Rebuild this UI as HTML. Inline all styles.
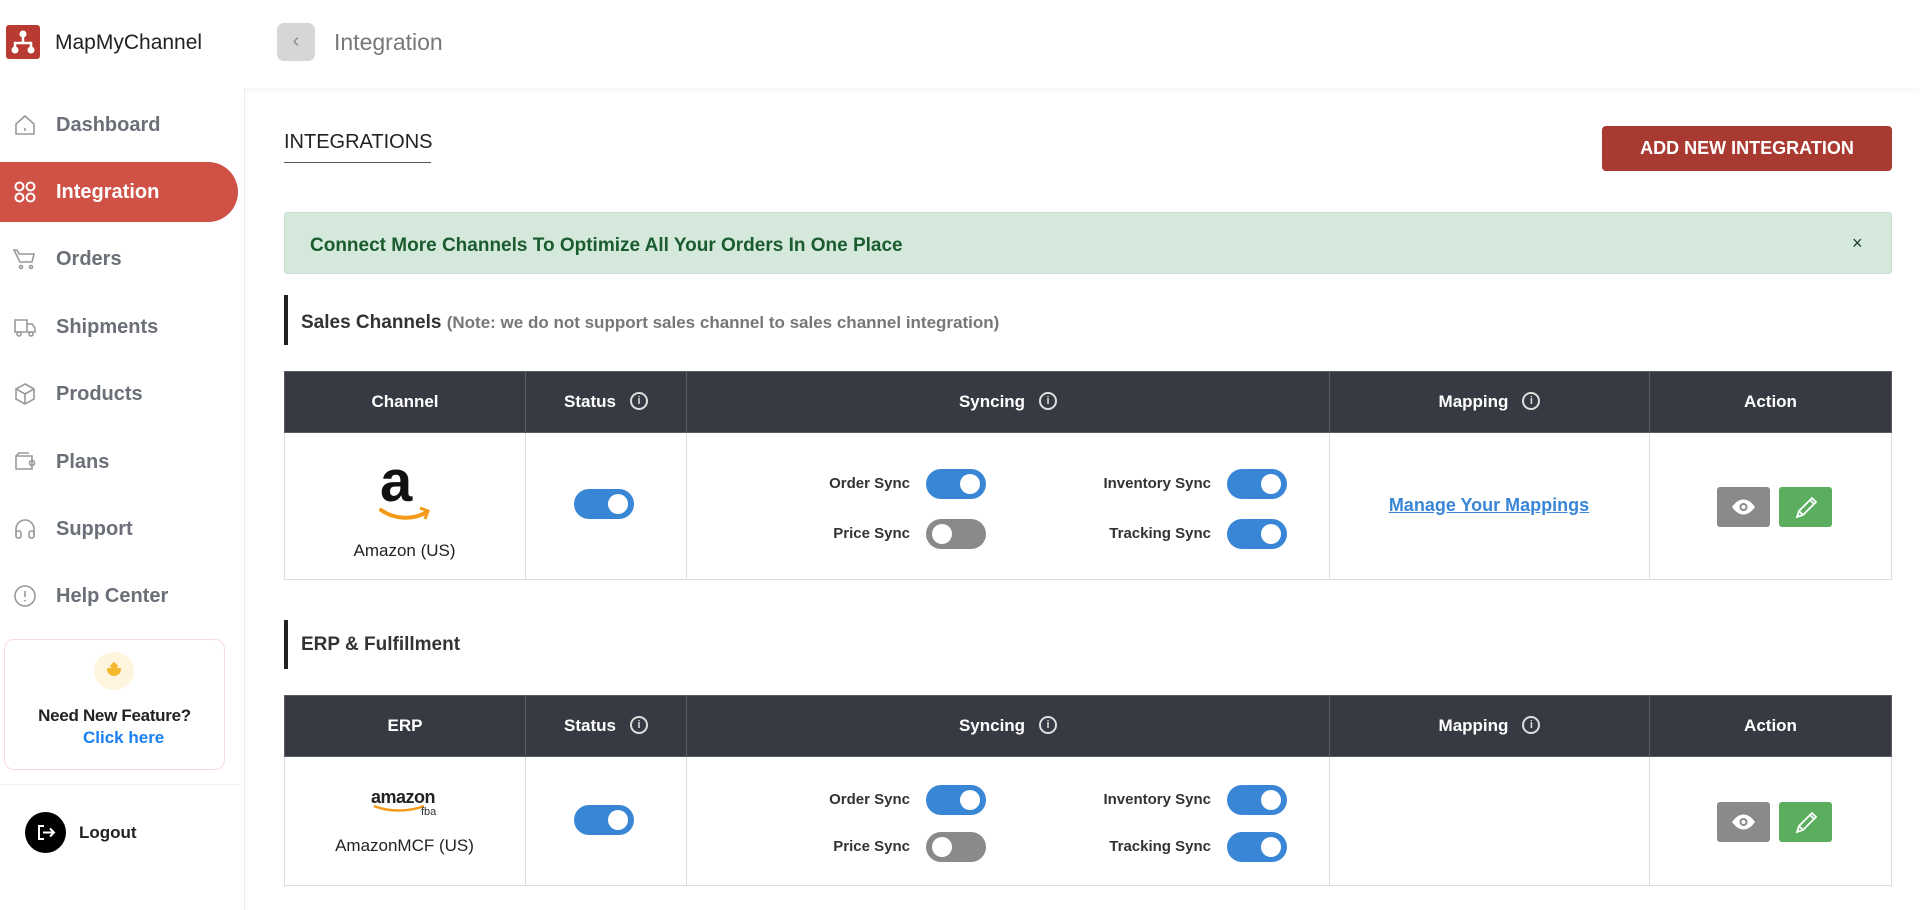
<!DOCTYPE html>
<html><head><meta charset="utf-8"><style>
*{margin:0;padding:0;box-sizing:border-box}
body{width:1920px;height:910px;overflow:hidden;background:#fff;font-family:"Liberation Sans",Arial,sans-serif;position:relative}
.a{position:absolute}
.hdr{left:0;top:0;width:1920px;height:88px;background:#fff;box-shadow:0 2px 8px rgba(0,0,0,.05)}
.side{left:0;top:88px;width:245px;height:822px;border-right:1px solid #ececf0;background:#fff}
.nav{left:0;width:238px;height:60px;display:flex;align-items:center;font-size:20px;font-weight:bold;color:#6b6f78}
.nav svg{position:absolute;left:13px}
.nav span{position:absolute;left:56px}
.nav.act{background:#d05145;color:#fff;border-radius:0 30px 30px 0}
.tog{position:absolute;width:60px;height:30px;border-radius:15px;background:#3a86d6}
.tog::after{content:"";position:absolute;right:6px;top:5px;width:20px;height:20px;border-radius:50%;background:#fff}
.tog.off{background:#8a898c}
.tog.off::after{left:6px;right:auto}
.lbl{position:absolute;font-size:15px;font-weight:bold;color:#333;text-align:right;width:200px}
table{position:absolute;left:284px;width:1608px;border-collapse:collapse}
th{background:#373a42;color:#fff;font-size:17px;font-weight:bold;height:61px;border:1px solid #5a5d65}
td{border:1px solid #ddd;position:relative}
.i{display:inline-block;width:18px;height:18px;border:2px solid #ddd;border-radius:50%;vertical-align:middle;margin-left:14px;position:relative;top:-2px;font-size:11px;line-height:14px;text-align:center;color:#ddd}
.btn{position:absolute;width:53px;height:40px;border-radius:3px}
</style></head><body>
<div class="a hdr"></div>
<div class="a" style="left:6px;top:25px;width:34px;height:34px;background:#b83a30;border-radius:3px">
<svg width="34" height="34" viewBox="0 0 34 34"><circle cx="17" cy="9" r="3.5" fill="#fff"/><circle cx="9" cy="25" r="3.5" fill="#fff"/><circle cx="25" cy="25" r="3.5" fill="#fff"/><path d="M17 12v6M9 22v-4h16v4" stroke="#fff" stroke-width="2.5" fill="none"/></svg></div>
<div class="a" style="left:55px;top:31px;font-size:21px;color:#222">MapMyChannel</div>
<div class="a" style="left:277px;top:23px;width:38px;height:38px;background:#d6d6d9;border-radius:7px;color:#888;font-size:20px;text-align:center;line-height:36px">‹</div>
<div class="a" style="left:334px;top:29px;font-size:23px;color:#777">Integration</div>

<div class="a side"></div>
<div class="a nav" style="top:95px"><svg width="24" height="24" viewBox="0 0 24 24" fill="none" stroke="#999" stroke-width="1.6"><path d="M3 11l9-8 9 8v10H3z" stroke-linejoin="round"/><path d="M12 15v3"/></svg><span>Dashboard</span></div>
<div class="a nav act" style="top:162px"><svg width="24" height="24" viewBox="0 0 24 24" fill="none" stroke="#fff" stroke-width="2"><circle cx="6.5" cy="6.5" r="4"/><circle cx="17.5" cy="6.5" r="4"/><circle cx="6.5" cy="17.5" r="4"/><circle cx="17.5" cy="17.5" r="4"/></svg><span>Integration</span></div>
<div class="a nav" style="top:229px"><svg width="24" height="24" viewBox="0 0 24 24" fill="none" stroke="#999" stroke-width="1.6"><path d="M1 3h3l2 4h15l-2 8H7z"/><circle cx="8" cy="20" r="1.5"/><circle cx="18" cy="20" r="1.5"/></svg><span>Orders</span></div>
<div class="a nav" style="top:297px"><svg width="24" height="24" viewBox="0 0 24 24" fill="none" stroke="#999" stroke-width="1.6"><path d="M2 5h12v12H2zM14 9h5l3 4v4h-8z"/><circle cx="6" cy="19" r="2"/><circle cx="18" cy="19" r="2"/></svg><span>Shipments</span></div>
<div class="a nav" style="top:364px"><svg width="24" height="24" viewBox="0 0 24 24" fill="none" stroke="#999" stroke-width="1.6"><path d="M12 2l9 5v10l-9 5-9-5V7zM3 7l9 5 9-5M12 12v10"/></svg><span>Products</span></div>
<div class="a nav" style="top:432px"><svg width="24" height="24" viewBox="0 0 24 24" fill="none" stroke="#999" stroke-width="1.6"><path d="M3 6h16v13H3zM3 6l3-3h10"/><circle cx="19" cy="13" r="2.5"/></svg><span>Plans</span></div>
<div class="a nav" style="top:499px"><svg width="24" height="24" viewBox="0 0 24 24" fill="none" stroke="#999" stroke-width="1.6"><path d="M3 18v-6a9 9 0 0118 0v6"/><rect x="3" y="14" width="5" height="7" rx="2"/><rect x="16" y="14" width="5" height="7" rx="2"/></svg><span>Support</span></div>
<div class="a nav" style="top:566px"><svg width="24" height="24" viewBox="0 0 24 24" fill="none" stroke="#999" stroke-width="1.6"><circle cx="12" cy="12" r="10"/><path d="M12 7v6M12 16v1.5"/></svg><span>Help Center</span></div>

<div class="a" style="left:4px;top:639px;width:221px;height:131px;border:1px solid #fadadd;border-radius:10px"></div>
<div class="a" style="left:94px;top:652px;width:40px;height:38px;border-radius:50%;background:#fff4de"></div>
<div class="a" style="left:107px;top:668px;width:14px;height:8px;background:#f5b92e;border-radius:0 0 8px 8px"></div>
<div class="a" style="left:111px;top:663px;width:6px;height:6px;background:#f5b92e;transform:rotate(45deg)"></div>
<div class="a" style="left:0;top:706px;width:229px;text-align:center;font-size:17px;color:#222;font-weight:bold;letter-spacing:-.3px">Need New Feature?</div>
<div class="a" style="left:83px;top:728px;font-size:17px;color:#1a7ff0;font-weight:bold">Click here</div>
<div class="a" style="left:0;top:784px;width:240px;height:1px;background:#f0f0f4"></div>
<div class="a" style="left:25px;top:812px;width:41px;height:41px;border-radius:50%;background:#000">
<svg width="41" height="41" viewBox="0 0 41 41" fill="none" stroke="#fff" stroke-width="2"><path d="M19 14h-5v13h5M18 20.5h11M25 16.5l4 4-4 4"/></svg></div>
<div class="a" style="left:79px;top:823px;font-size:17px;color:#222;font-weight:bold">Logout</div>

<div class="a" style="left:284px;top:131px;font-size:20px;color:#222">INTEGRATIONS</div>
<div class="a" style="left:284px;top:162px;width:147px;height:1px;background:#555"></div>
<div class="a" style="left:1602px;top:126px;width:290px;height:45px;background:#a93a31;border-radius:4px;color:#fff;font-size:18px;font-weight:bold;text-align:center;line-height:45px">ADD NEW INTEGRATION</div>

<div class="a" style="left:284px;top:212px;width:1608px;height:62px;background:#d4e9dc;border:1px solid #c6e1d0;border-radius:3px"></div>
<div class="a" style="left:310px;top:235px;font-size:19px;font-weight:bold;color:#1a5c2e">Connect More Channels To Optimize All Your Orders In One Place</div>
<div class="a" style="left:1852px;top:233px;font-size:18px;color:#1a3a2a">×</div>

<div class="a" style="left:284px;top:295px;width:4px;height:50px;background:#222"></div>
<div class="a" style="left:301px;top:312px;font-size:19px;font-weight:bold;color:#333">Sales Channels <span style="font-size:17px;color:#777">(Note: we do not support sales channel to sales channel integration)</span></div>

<table style="top:371px">
<tr><th style="width:241px">Channel</th><th style="width:161px">Status<span class="i">i</span></th><th style="width:643px">Syncing<span class="i">i</span></th><th style="width:320px">Mapping<span class="i">i</span></th><th>Action</th></tr>
<tr><td style="height:147px"></td><td></td><td></td><td></td><td></td></tr>
</table>
<div class="a" style="left:380px;top:452px;font-size:58px;font-weight:bold;color:#111;line-height:60px">a</div>
<svg class="a" style="left:378px;top:505px" width="56" height="20" viewBox="0 0 56 20"><path d="M3 5c14 10 32 10 46 2" stroke="#f49a1a" stroke-width="4" fill="none" stroke-linecap="round"/><path d="M42 3l8 3-3 8" stroke="#f49a1a" stroke-width="3" fill="none"/></svg>
<div class="a" style="left:284px;top:541px;width:241px;text-align:center;font-size:17px;color:#222">Amazon (US)</div>
<div class="tog" style="left:574px;top:489px"></div>
<div class="lbl" style="left:710px;top:475px">Order Sync</div><div class="tog" style="left:926px;top:469px"></div>
<div class="lbl" style="left:710px;top:525px">Price Sync</div><div class="tog off" style="left:926px;top:519px"></div>
<div class="lbl" style="left:1011px;top:475px">Inventory Sync</div><div class="tog" style="left:1227px;top:469px"></div>
<div class="lbl" style="left:1011px;top:525px">Tracking Sync</div><div class="tog" style="left:1227px;top:519px"></div>
<div class="a" style="left:1329px;top:495px;width:320px;text-align:center;font-size:18px;font-weight:bold;color:#3a86d6;text-decoration:underline">Manage Your Mappings</div>
<div class="btn" style="left:1717px;top:487px;background:#8a898c"><svg width="53" height="40" viewBox="0 0 53 40"><path d="M15 20c7-10 16-10 23 0-7 10-16 10-23 0z" fill="#fff"/><circle cx="26.5" cy="20" r="4" fill="#8a898c"/><circle cx="26.5" cy="20" r="2" fill="#fff"/></svg></div>
<div class="btn" style="left:1779px;top:487px;background:#5aae5e"><svg width="53" height="40" viewBox="0 0 53 40" fill="none" stroke="#fff" stroke-width="1.8"><path d="M18 30l2-6 13-13 4 4-13 13zM31 13l4 4M20 24l4 4"/></svg></div>

<div class="a" style="left:284px;top:620px;width:4px;height:49px;background:#222"></div>
<div class="a" style="left:301px;top:634px;font-size:19px;font-weight:bold;color:#333">ERP &amp; Fulfillment</div>

<table style="top:695px">
<tr><th style="width:241px">ERP</th><th style="width:161px">Status<span class="i">i</span></th><th style="width:643px">Syncing<span class="i">i</span></th><th style="width:320px">Mapping<span class="i">i</span></th><th>Action</th></tr>
<tr><td style="height:129px"></td><td></td><td></td><td></td><td></td></tr>
</table>
<div class="a" style="left:371px;top:787px;font-size:18px;font-weight:bold;color:#222;letter-spacing:-.5px">amazon</div>
<svg class="a" style="left:372px;top:803px" width="66" height="10"><path d="M2 3c15 6 35 6 50 0" stroke="#f49a1a" stroke-width="2.5" fill="none"/></svg>
<div class="a" style="left:421px;top:806px;font-size:11px;color:#333">fba</div>
<div class="a" style="left:284px;top:836px;width:241px;text-align:center;font-size:17px;color:#222">AmazonMCF (US)</div>
<div class="tog" style="left:574px;top:805px"></div>
<div class="lbl" style="left:710px;top:791px">Order Sync</div><div class="tog" style="left:926px;top:785px"></div>
<div class="lbl" style="left:710px;top:838px">Price Sync</div><div class="tog off" style="left:926px;top:832px"></div>
<div class="lbl" style="left:1011px;top:791px">Inventory Sync</div><div class="tog" style="left:1227px;top:785px"></div>
<div class="lbl" style="left:1011px;top:838px">Tracking Sync</div><div class="tog" style="left:1227px;top:832px"></div>
<div class="btn" style="left:1717px;top:802px;background:#8a898c"><svg width="53" height="40" viewBox="0 0 53 40"><path d="M15 20c7-10 16-10 23 0-7 10-16 10-23 0z" fill="#fff"/><circle cx="26.5" cy="20" r="4" fill="#8a898c"/><circle cx="26.5" cy="20" r="2" fill="#fff"/></svg></div>
<div class="btn" style="left:1779px;top:802px;background:#5aae5e"><svg width="53" height="40" viewBox="0 0 53 40" fill="none" stroke="#fff" stroke-width="1.8"><path d="M18 30l2-6 13-13 4 4-13 13zM31 13l4 4M20 24l4 4"/></svg></div>
</body></html>
